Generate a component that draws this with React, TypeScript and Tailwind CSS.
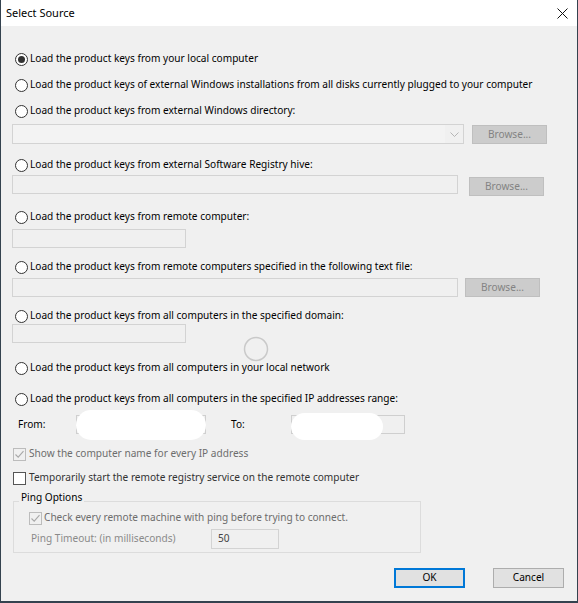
import React from "react";

function Radio({ checked, label, className }: { checked?: boolean; label: string; className?: string }) {
  return (
    <div className={"flex items-center h-4 pl-[3px] " + (className ?? "")}>
      <span className="w-[13px] h-[13px] rounded-full border border-[#333333] bg-white flex items-center justify-center shrink-0">
        {checked && <span className="w-[7px] h-[7px] rounded-full bg-[#333333]" />}
      </span>
      <span className="ml-[2px] whitespace-nowrap">{label}</span>
    </div>
  );
}

function Check({ checked, disabled }: { checked?: boolean; disabled?: boolean }) {
  return (
    <span
      className={
        "w-[13px] h-[13px] border flex items-center justify-center shrink-0 " +
        (disabled ? "border-[#bcbcbc] bg-[#f0f0f0]" : "border-[#555555] bg-white")
      }
    >
      {checked && (
        <svg width="11" height="11" viewBox="0 0 11 11">
          <path d="M1.5 5.5 L4.2 8.2 L9.5 2.2" fill="none" stroke={disabled ? "#a8a8a8" : "#333"} strokeWidth="1.1" />
        </svg>
      )}
    </span>
  );
}

function TextBox({ className }: { className: string }) {
  return <div className={"h-[19px] border border-[#d3d3d3] bg-[#f0f0f0] " + className} />;
}

function BrowseButton({ className }: { className: string }) {
  return (
    <div
      className={
        "w-[75px] h-[19px] border border-[#bfbfbf] bg-[#cccccc] text-[#838383] flex items-center justify-center " +
        className
      }
    >
      Browse...
    </div>
  );
}

export default function App() {
  return (
    <div className="w-[578px] h-[603px] flex flex-col bg-[#f0f0f0] border-x border-b-2 border-[#34424f] font-['Noto_Sans',sans-serif] text-[10.1px] text-black">
      {/* Title bar */}
      <div className="h-[26px] bg-white flex items-center justify-between pl-[5px] pr-[9px] text-[11px]">
        <span>Select Source</span>
        <svg width="11" height="11" viewBox="0 0 11 11">
          <path d="M0.5 0.5 L10.5 10.5 M10.5 0.5 L0.5 10.5" stroke="#111" strokeWidth="1" />
        </svg>
      </div>

      {/* Body */}
      <div className="relative flex-1 flex flex-col pl-[11px] pt-[25px]">
        <Radio checked label="Load the product keys from your local computer" />
        <Radio
          className="mt-[10px]"
          label="Load the product keys of external Windows installations from all disks currently plugged to your computer"
        />
        <Radio className="mt-[10px]" label="Load the product keys from external Windows directory:" />

        <div className="mt-[5px] flex items-start">
          <div className="w-[452px] h-[20px] border border-[#d3d3d3] bg-[#f0f0f0] flex">
            <div className="flex-1 bg-[#f3f3f3]" />
            <div className="w-[18px] flex items-center justify-center">
              <svg width="9" height="5" viewBox="0 0 9 5">
                <path d="M0.5 0.5 L4.5 4.5 L8.5 0.5" fill="none" stroke="#b5b5b5" strokeWidth="1" />
              </svg>
            </div>
          </div>
          <BrowseButton className="ml-[8px] mt-[1px]" />
        </div>

        <Radio className="mt-[13px]" label="Load the product keys from external Software Registry hive:" />
        <div className="mt-[2px] flex items-start">
          <TextBox className="w-[446px]" />
          <BrowseButton className="ml-[11px] mt-[2px]" />
        </div>

        <Radio className="mt-[13px]" label="Load the product keys from remote computer:" />
        <TextBox className="mt-[4px] w-[174px]" />

        <Radio className="mt-[11px]" label="Load the product keys from remote computers specified in the following text file:" />
        <div className="mt-[3px] flex items-start">
          <TextBox className="w-[446px]" />
          <BrowseButton className="ml-[7px]" />
        </div>

        <Radio className="mt-[11px]" label="Load the product keys from all computers in the specified domain:" />
        <TextBox className="mt-[0px] w-[174px]" />

        <Radio className="mt-[17px]" label="Load the product keys from all computers in your local network" />
        <Radio className="mt-[15px]" label="Load the product keys from all computers in the specified IP addresses range:" />

        <div className="mt-[8px] flex items-center h-[19px]">
          <span className="ml-[6px] w-[58px]">From:</span>
          <div className="relative w-[130px] h-[19px] border border-[#cfcfcf] bg-[#f0f0f0]">
            <div className="absolute -left-[1px] -top-[6px] w-[130px] h-[30px] rounded-[15px] bg-white" />
          </div>
          <span className="ml-[25px] w-[60px]">To:</span>
          <div className="relative w-[114px] h-[19px] border border-[#cfcfcf] bg-[#f0f0f0]">
            <div className="absolute -left-[1px] -top-[3px] w-[92px] h-[27px] rounded-[14px] bg-white" />
          </div>
        </div>

        <div className="mt-[12px] h-4 flex items-center pl-[1px] gap-[3px] text-[#6d6d6d]">
          <Check checked disabled />
          <span>Show the computer name for every IP address</span>
        </div>
        <div className="mt-[8px] h-4 flex items-center pl-[1px] gap-[3px] text-[#333333]">
          <Check />
          <span>Temporarily start the remote registry service on the remote computer</span>
        </div>

        <fieldset className="mt-[5px] ml-[1px] w-[408px] border border-[#dcdcdc] pl-[15px] pb-[3px]">
          <legend className="ml-[-10px] px-[2px] leading-[12px] pb-[8px]">Ping Options</legend>
          <div className="h-[14px] flex items-center gap-[2px] text-[#6d6d6d]">
            <Check checked disabled />
            <span>Check every remote machine with ping before trying to connect.</span>
          </div>
          <div className="mt-[4px] flex items-center h-[20px] pl-[2px]">
            <span className="w-[180px] text-[#8a8a8a]">Ping Timeout: (in milliseconds)</span>
            <div className="w-[68px] h-[20px] border border-[#d3d3d3] flex items-center pl-[6px] text-[#444444]">50</div>
          </div>
        </fieldset>

        <div className="mt-[15px] flex justify-end gap-[28px] pr-[13px]">
          <div className="w-[71px] h-[20px] border-2 border-[#0078d7] bg-[#e1e1e1] flex items-center justify-center">OK</div>
          <div className="w-[71px] h-[20px] border border-[#adadad] bg-[#e1e1e1] flex items-center justify-center">Cancel</div>
        </div>

        {/* busy indicator drawn over the dialog */}
        <svg className="absolute left-[242px] top-[310px]" width="26" height="26" viewBox="0 0 26 26">
          <circle cx="13" cy="13" r="11.5" fill="none" stroke="#c9c9c9" strokeWidth="1.5" />
        </svg>
      </div>
    </div>
  );
}
